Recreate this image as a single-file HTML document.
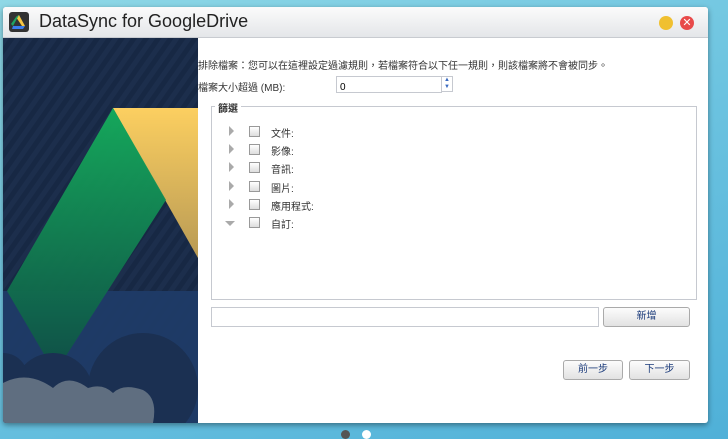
<!DOCTYPE html>
<html><head><meta charset="utf-8"><style>
body{margin:0;width:728px;height:439px;overflow:hidden;background:linear-gradient(160deg,#8fd8e6 0%,#6cc3e0 50%,#4fb0d8 100%);font-family:"Liberation Sans","Noto Sans CJK TC",sans-serif;position:relative}
.win{position:absolute;left:3px;top:7px;width:705px;height:416px;background:#fff;box-shadow:0 2px 6px rgba(0,0,0,.4);border-radius:3px;overflow:hidden}
.title{position:absolute;left:0;top:0;width:705px;height:30px;background:linear-gradient(#fbfbfb,#e4e6e9);border-bottom:1px solid #c8cbd0}
.title .t{position:absolute;left:36px;top:4px;font-size:18px;color:#222}
.art{position:absolute;left:0;top:31px;width:195px;height:385px}
.c{position:absolute;font-size:10px;color:#333;white-space:nowrap}
.box{position:absolute;border:1px solid #c6c9d0;background:#fff}
.cb{position:absolute;width:9px;height:9px;border:1px solid #999;background:linear-gradient(#fff,#ddd)}
.btn{position:absolute;height:18px;border:1px solid #aaa;border-radius:3px;background:linear-gradient(#fcfcfc,#e2e2e2);font-size:10px;color:#1a3a7a;text-align:center;line-height:18px}
.tri{position:absolute;width:0;height:0;border-left:5px solid #aaa;border-top:5px solid transparent;border-bottom:5px solid transparent}
</style></head><body>
<div class="win">
<div class="title">
<svg style="position:absolute;left:6px;top:5px" width="20" height="20"><rect width="20" height="20" rx="3" fill="#333"/><polygon points="10,3 16,14 13,14 7,5" fill="#f7c744"/><polygon points="7,5 10,3 4,14 2,12" fill="#1ea362"/><polygon points="4,14 16,14 14,17 3,17" fill="#3b7ded"/></svg>
<div class="t">DataSync for GoogleDrive</div>
<div style="position:absolute;left:656px;top:9px;width:14px;height:14px;border-radius:50%;background:#f0c030"></div>
<div style="position:absolute;left:677px;top:9px;width:14px;height:14px;border-radius:50%;background:#e84a4a;color:#fff;font-size:11px;text-align:center;line-height:14px">✕</div>
</div>
<svg class="art" viewBox="0 0 195 385">
<defs><pattern id="s" width="10" height="10" patternUnits="userSpaceOnUse" patternTransform="rotate(35)"><rect width="10" height="10" fill="#172844"/><rect width="5" height="10" fill="#1c2e4c"/></pattern>
<linearGradient id="y" x1="0" y1="0" x2="0" y2="1"><stop offset="0" stop-color="#fccf60"/><stop offset="1" stop-color="#b89a55"/></linearGradient>
<linearGradient id="g" x1="0" y1="0" x2="0" y2="1"><stop offset="0" stop-color="#15ae5c"/><stop offset="1" stop-color="#0e4f45"/></linearGradient></defs>
<rect width="195" height="385" fill="url(#s)"/>
<rect y="253" width="195" height="132" fill="#1f3c69" opacity=".9"/>
<polygon points="110,70 195,70 195,220" fill="url(#y)"/>
<polygon points="110,70 163,162 52,335 4,253" fill="url(#g)" opacity=".95"/>
<circle cx="50" cy="355" r="40" fill="#1b3052"/><circle cx="140" cy="350" r="55" fill="#1b3052"/><circle cx="0" cy="340" r="25" fill="#1b3052"/>
<path d="M0 345 Q25 332 50 350 Q65 335 85 350 Q100 345 110 355 Q120 345 140 352 Q155 360 150 385 L0 385Z" fill="#5f6e80"/>
</svg>
<div class="c" style="left:195px;top:50px">排除檔案：您可以在這裡設定過濾規則，若檔案符合以下任一規則，則該檔案將不會被同步。</div>
<div class="c" style="left:195px;top:72px">檔案大小超過 (MB):</div>
<div class="box" style="left:333px;top:69px;width:104px;height:15px"><span style="font-size:10px;padding-left:3px;line-height:15px">0</span></div>
<div style="position:absolute;left:438px;top:69px;width:12px;height:16px;border:1px solid #c6c9d0;box-sizing:border-box;font-size:6px;color:#3a6ac0;line-height:7px;text-align:center">▲<br>▼</div>
<div class="box" style="left:208px;top:99px;width:484px;height:192px"></div>
<div class="c" style="left:212px;top:93px;background:#fff;padding:0 3px;font-weight:bold">篩選</div>
<div class="tri" style="left:226px;top:119px"></div><div class="cb" style="left:246px;top:119px"></div><div class="c" style="left:268px;top:118px">文件:</div>
<div class="tri" style="left:226px;top:137px"></div><div class="cb" style="left:246px;top:137px"></div><div class="c" style="left:268px;top:136px">影像:</div>
<div class="tri" style="left:226px;top:155px"></div><div class="cb" style="left:246px;top:155px"></div><div class="c" style="left:268px;top:154px">音訊:</div>
<div class="tri" style="left:226px;top:174px"></div><div class="cb" style="left:246px;top:174px"></div><div class="c" style="left:268px;top:173px">圖片:</div>
<div class="tri" style="left:226px;top:192px"></div><div class="cb" style="left:246px;top:192px"></div><div class="c" style="left:268px;top:191px">應用程式:</div>
<div style="position:absolute;left:222px;top:214px;width:0;height:0;border-top:5px solid #aaa;border-left:5px solid transparent;border-right:5px solid transparent"></div><div class="cb" style="left:246px;top:210px"></div><div class="c" style="left:268px;top:209px">自訂:</div>
<div class="box" style="left:208px;top:300px;width:386px;height:18px"></div>
<div class="btn" style="left:600px;top:300px;width:85px">新增</div>
<div class="btn" style="left:560px;top:353px;width:58px">前一步</div>
<div class="btn" style="left:626px;top:353px;width:59px">下一步</div>
</div>
<div style="position:absolute;left:341px;top:430px;width:9px;height:9px;border-radius:50%;background:#555"></div>
<div style="position:absolute;left:362px;top:430px;width:9px;height:9px;border-radius:50%;background:#fff"></div>
</body></html>
